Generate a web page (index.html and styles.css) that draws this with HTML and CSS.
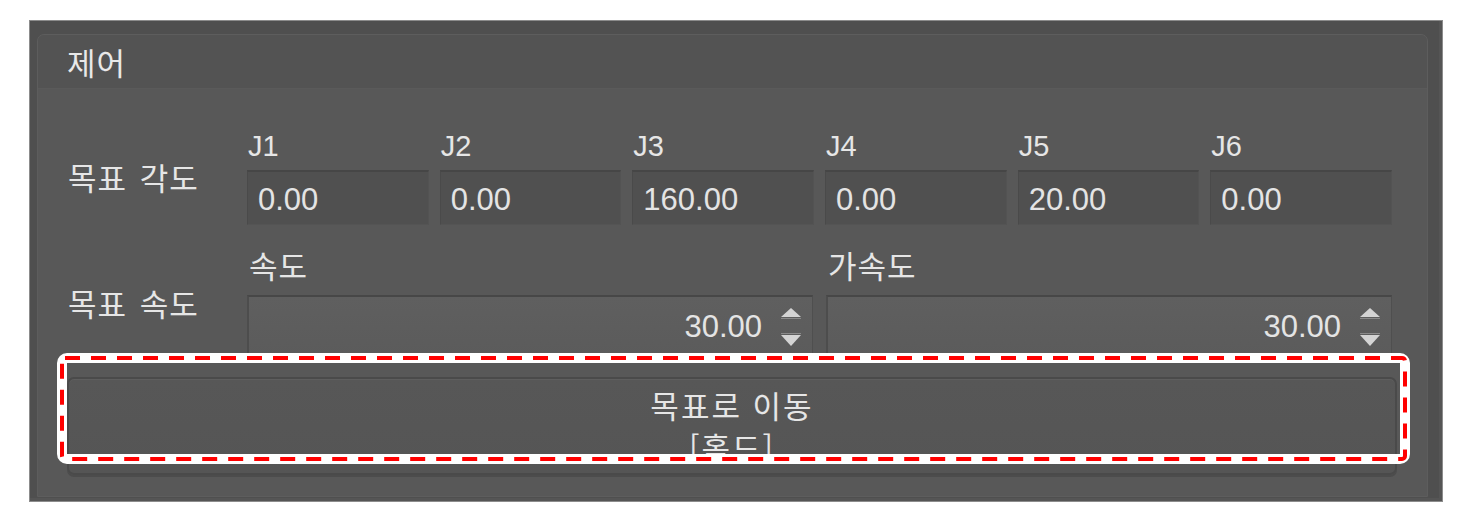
FILE: index.html
```html
<!DOCTYPE html>
<html lang="ko">
<head>
<meta charset="utf-8">
<title>제어</title>
<link rel="stylesheet" href="styles.css">
</head>
<body>
<div class="frame">
  <div class="group">
    <div class="group-title">제어</div>
    <div class="group-body">
      <div class="row row-angles">
        <div class="row-label">목표 각도</div>
        <div class="joints">
          <div class="field"><div class="field-label">J1</div><div class="input">0.00</div></div>
          <div class="field"><div class="field-label">J2</div><div class="input">0.00</div></div>
          <div class="field"><div class="field-label">J3</div><div class="input">160.00</div></div>
          <div class="field"><div class="field-label">J4</div><div class="input">0.00</div></div>
          <div class="field"><div class="field-label">J5</div><div class="input">20.00</div></div>
          <div class="field"><div class="field-label">J6</div><div class="input">0.00</div></div>
        </div>
      </div>
      <div class="row row-speeds">
        <div class="row-label">목표 속도</div>
        <div class="speeds">
          <div class="field">
            <div class="field-label ko">속도</div>
            <div class="spin">
              <span class="spin-value">30.00</span>
              <svg class="spin-arrows" width="40" height="46" viewBox="0 0 40 46">
                <polygon points="20,4 30,13 10,13" fill="#d4d4d4"/>
                <line x1="10" y1="14.5" x2="30" y2="14.5" stroke="#8a8a8a" stroke-width="1"/>
                <line x1="10" y1="29.5" x2="30" y2="29.5" stroke="#8a8a8a" stroke-width="1"/>
                <polygon points="10,31 30,31 20,42" fill="#d4d4d4"/>
              </svg>
            </div>
          </div>
          <div class="field">
            <div class="field-label ko">가속도</div>
            <div class="spin">
              <span class="spin-value">30.00</span>
              <svg class="spin-arrows" width="40" height="46" viewBox="0 0 40 46">
                <polygon points="20,4 30,13 10,13" fill="#d4d4d4"/>
                <line x1="10" y1="14.5" x2="30" y2="14.5" stroke="#8a8a8a" stroke-width="1"/>
                <line x1="10" y1="29.5" x2="30" y2="29.5" stroke="#8a8a8a" stroke-width="1"/>
                <polygon points="10,31 30,31 20,42" fill="#d4d4d4"/>
              </svg>
            </div>
          </div>
        </div>
      </div>
      <div class="btn-wrap">
        <button class="move-btn" type="button"><span>목표로 이동</span><span>[홀드]</span></button>
        <svg class="annot" width="1353" height="111" viewBox="0 0 1353 111">
          <rect x="5" y="5" width="1343" height="101" rx="5" ry="5" fill="none" stroke="#ffffff" stroke-width="10"/>
          <rect x="5" y="5" width="1343" height="101" rx="3" ry="3" fill="none" stroke="#ff0000" stroke-width="4" stroke-dasharray="15 11"/>
        </svg>
      </div>
    </div>
  </div>
</div>
</body>
</html>
```

FILE: styles.css
```css
html, body {
  margin: 0;
  padding: 0;
  background: #ffffff;
}

body {
  padding: 20px 0 0 29px;
  font-family: "Noto Sans CJK KR", "Liberation Sans", sans-serif;
  color: #e6e6e6;
}

.frame {
  box-sizing: border-box;
  width: 1414px;
  height: 482px;
  border: 1px solid #8c8c8c;
  background: #4f4f4f;
  padding: 13px 14px 4px 7px;
  box-shadow: inset -3px -3px 0 #555555;
}

.group {
  box-sizing: border-box;
  height: 100%;
  border: 1px solid #5d5d5d;
  border-radius: 7px 7px 0 0;
  background: #585858;
  display: flex;
  flex-direction: column;
  overflow: visible;
}

.group-title {
  height: 53px;
  flex: none;
  display: flex;
  align-items: center;
  padding-left: 29px;
  background: #535353;
  border-radius: 6px 6px 0 0;
  border-bottom: 1px solid #5a5a5a;
  font-size: 31px;
  letter-spacing: 1px;
  color: #e8e8e8;
}

.group-body {
  padding: 39px 35px 0 30px;
  display: flex;
  flex-direction: column;
}

.row {
  display: flex;
  align-items: center;
}

.row-label {
  width: 179px;
  flex: none;
  font-size: 31px;
  letter-spacing: 1px;
  word-spacing: 3px;
  color: #e6e6e6;
}

.joints {
  flex: 1;
  display: grid;
  grid-template-columns: repeat(6, 1fr);
  column-gap: 11px;
}

.speeds {
  flex: 1;
  display: grid;
  grid-template-columns: repeat(2, 1fr);
  column-gap: 13px;
}

.field {
  display: flex;
  flex-direction: column;
}

.field-label {
  font-family: "Liberation Sans", "Noto Sans CJK KR", sans-serif;
  font-size: 29px;
  line-height: 36px;
  height: 36px;
  margin-bottom: 6px;
  padding-left: 1px;
  color: #e6e6e6;
}

.field-label.ko {
  font-family: "Noto Sans CJK KR", sans-serif;
  font-size: 31px;
  letter-spacing: 1px;
  margin-bottom: 12px;
  padding-left: 2px;
}

.input {
  box-sizing: border-box;
  height: 55px;
  background: #505050;
  border-top: 2px solid #464646;
  border-left: 1px solid #4a4a4a;
  border-right: 1px solid #535353;
  border-bottom: 1px solid #545454;
  padding: 3px 0 0 10px;
  font-family: "Liberation Sans", sans-serif;
  font-size: 31px;
  line-height: 49px;
  color: #e4e4e4;
}

.row-speeds {
  margin-top: 22px;
}

.spin {
  box-sizing: border-box;
  height: 62px;
  background: linear-gradient(#5f5f5f, #5b5b5b);
  border-top: 2px solid #474747;
  border-left: 2px solid #4d4d4d;
  border-right: 1px solid #4f4f4f;
  display: flex;
  align-items: center;
  justify-content: flex-end;
  padding-right: 1px;
}

.spin-value {
  font-family: "Liberation Sans", sans-serif;
  font-size: 31px;
  color: #e4e4e4;
  margin-right: 9px;
}

.spin-arrows {
  display: block;
  flex: none;
}

.btn-wrap {
  position: relative;
  margin: 20px -5px 0 -1px;
}

.move-btn {
  box-sizing: border-box;
  width: 100%;
  height: 98px;
  display: flex;
  flex-direction: column;
  align-items: center;
  justify-content: center;
  background: linear-gradient(#575757, #555555);
  border: 2px solid #4a4a4a;
  border-radius: 7px;
  box-shadow: inset 0 1px 0 #5e5e5e, 0 2px 0 #4c4c4c;
  font-family: "Noto Sans CJK KR", sans-serif;
  font-size: 31px;
  line-height: 42px;
  letter-spacing: 2px;
  color: #e6e6e6;
  padding: 0;
}

.annot {
  position: absolute;
  left: -10px;
  top: -24px;
  display: block;
  pointer-events: none;
}
```
